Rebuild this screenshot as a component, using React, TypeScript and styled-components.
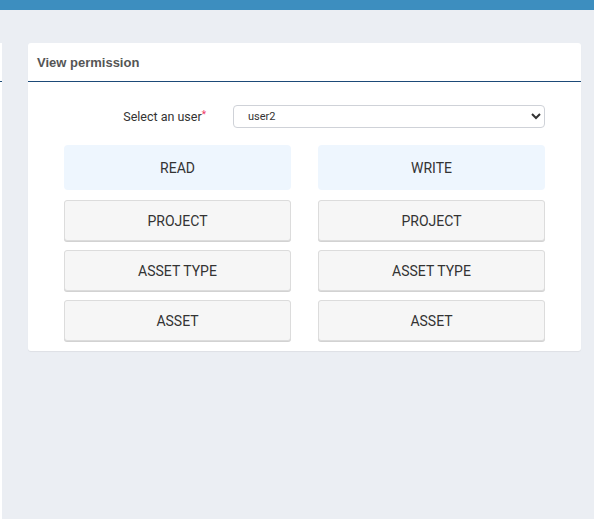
import styled, { createGlobalStyle } from "styled-components";

const GlobalStyle = createGlobalStyle`
  html, body {
    margin: 0;
    padding: 0;
    height: 100%;
    background: #ebeef3;
    font-family: Roboto, "Liberation Sans", Arial, sans-serif;
  }
  #root {
    height: 100%;
  }
`;

const Page = styled.div`
  display: flex;
  flex-direction: column;
  height: 100%;
  overflow: hidden;
`;

const TopBar = styled.div`
  height: 10px;
  flex-shrink: 0;
  background: #3d8ebf;
`;

const Content = styled.div`
  flex: 1;
  display: flex;
  align-items: flex-start;
  gap: 26px;
  padding-top: 33px;
`;

const SidePanel = styled.div`
  width: 2px;
  align-self: stretch;
  background: #ffffff;

  .side-header {
    height: 38px;
    border-bottom: 1px solid #1f4e79;
  }
`;

const Card = styled.section`
  width: 553px;
  background: #ffffff;
  border-radius: 3px;
  box-shadow: 0 1px 1px rgba(0, 0, 0, 0.06);
`;

const CardHeader = styled.div`
  height: 38px;
  display: flex;
  align-items: center;
  padding: 0 9px;
  border-bottom: 1px solid #1d4a78;
  font-family: "Liberation Sans", Arial, sans-serif;
  font-size: 13px;
  font-weight: 700;
  color: #555555;
`;

const CardBody = styled.div`
  padding: 23px 36px 10px;
`;

const FieldRow = styled.div`
  display: flex;
  align-items: center;
  margin-bottom: 17px;
`;

const Label = styled.label`
  width: 142px;
  padding-right: 27px;
  text-align: right;
  font-size: 12.5px;
  color: #333333;

  .required {
    color: #ee3563;
    font-size: 10px;
    vertical-align: 3px;
  }
`;

const Select = styled.select`
  width: 312px;
  height: 23px;
  padding: 0 10px;
  border: 1px solid #cfd2d8;
  border-radius: 4px;
  background: #ffffff;
  font-family: Roboto, "Liberation Sans", Arial, sans-serif;
  font-size: 11px;
  color: #333333;
`;

const Grid = styled.div`
  display: grid;
  grid-template-columns: 227px 227px;
  column-gap: 27px;
`;

const Column = styled.div`
  display: flex;
  flex-direction: column;
  gap: 9px;
`;

const Heading = styled.div`
  height: 45px;
  margin-bottom: 1px;
  display: flex;
  align-items: center;
  justify-content: center;
  background: #eef6fe;
  border-radius: 4px;
  font-size: 14px;
  color: #333333;
`;

const PermButton = styled.button`
  height: 41px;
  border: 1px solid #dcdcdc;
  border-radius: 3px;
  background: #f6f6f6;
  box-shadow: 0 1px 0 #d2d2d2;
  font-family: Roboto, "Liberation Sans", Arial, sans-serif;
  font-size: 14px;
  color: #333333;
  cursor: pointer;
`;

const columns = [
  { title: "READ", items: ["PROJECT", "ASSET TYPE", "ASSET"] },
  { title: "WRITE", items: ["PROJECT", "ASSET TYPE", "ASSET"] },
];

const App = () => {
  return (
    <Page>
      <GlobalStyle />
      <TopBar />
      <Content>
        <SidePanel>
          <div className="side-header" />
        </SidePanel>

        <Card>
          <CardHeader>View permission</CardHeader>
          <CardBody>
            <FieldRow>
              <Label htmlFor="user">
                Select an user<span className="required">*</span>
              </Label>
              <Select id="user" defaultValue="user2">
                <option value="user1">user1</option>
                <option value="user2">user2</option>
                <option value="user3">user3</option>
              </Select>
            </FieldRow>

            <Grid>
              {columns.map((col) => (
                <Column key={col.title}>
                  <Heading>{col.title}</Heading>
                  {col.items.map((item) => (
                    <PermButton key={item}>{item}</PermButton>
                  ))}
                </Column>
              ))}
            </Grid>
          </CardBody>
        </Card>
      </Content>
    </Page>
  );
};

export default App;
